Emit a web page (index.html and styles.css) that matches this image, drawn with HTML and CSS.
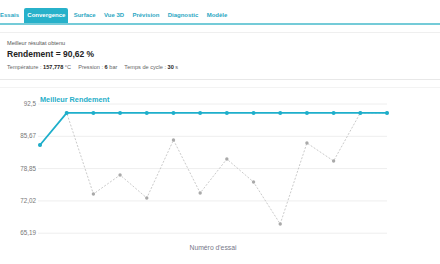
FILE: index.html
```html
<!DOCTYPE html>
<html lang="fr">
<head>
    <meta charset="UTF-8">
    <meta name="viewport" content="width=device-width, initial-scale=1.0">
    <title>Convergence</title>
    <link rel="stylesheet" href="styles.css">
</head>
<body>
    <nav class="tabs">
        <span class="tab">Essais</span>
        <span class="tab active">Convergence</span>
        <span class="tab">Surface</span>
        <span class="tab">Vue 3D</span>
        <span class="tab">Prévision</span>
        <span class="tab">Diagnostic</span>
        <span class="tab">Modèle</span>
    </nav>

    <section class="best-card">
        <p class="best-label">Meilleur résultat obtenu</p>
        <h2 class="best-value">Rendement = 90,62 %</h2>
        <p class="best-params">
            <span>Température : <b>157,778</b> °C</span>
            <span>Pression : <b>6</b> bar</span>
            <span>Temps de cycle : <b>30</b> s</span>
        </p>
    </section>

    <section class="chart-card">
        <svg class="chart" width="440" height="177" viewBox="0 87 440 177">
            <text class="chart-title" x="40" y="102">Meilleur Rendement</text>
            <g id="grid"></g>
            <polyline id="trials" class="trial-line" points=""></polyline>
            <g id="trial-dots"></g>
            <polyline id="best" class="best-line" points=""></polyline>
            <g id="best-dots"></g>
            <text class="axis-title" x="213" y="249.5" text-anchor="middle">Numéro d'essai</text>
        </svg>
    </section>

    <script>
        var trials = [83.83, 90.62, 73.47, 77.49, 72.62, 84.89, 73.68, 80.87, 76.0, 67.12, 84.25, 80.44, 90.62, 90.62];
        var ticks = [92.5, 85.67, 78.85, 72.02, 65.19];
        var x0 = 40, step = (387 - 40) / 13;
        var yTop = 104, yStep = 32.3;

        function yOf(v) {
            return yTop + (92.5 - v) / 6.83 * yStep;
        }

        var svgNs = "http://www.w3.org/2000/svg";
        function add(parent, tag, attrs, text) {
            var el = document.createElementNS(svgNs, tag);
            for (var k in attrs) el.setAttribute(k, attrs[k]);
            if (text) el.textContent = text;
            parent.appendChild(el);
            return el;
        }

        var grid = document.getElementById("grid");
        ticks.forEach(function(t, i) {
            var y = yTop + i * yStep;
            add(grid, "line", { x1: 38, x2: 387, y1: y, y2: y, "class": "grid-line" });
            add(grid, "text", { x: 36, y: y + 2, "text-anchor": "end", "class": "tick" }, t.toString().replace(".", ","));
        });

        var bestSoFar = 0, trialPts = [], bestPts = [];
        trials.forEach(function(v, i) {
            bestSoFar = Math.max(bestSoFar, v);
            var x = x0 + i * step;
            trialPts.push(x.toFixed(1) + "," + yOf(v).toFixed(1));
            bestPts.push(x.toFixed(1) + "," + yOf(bestSoFar).toFixed(1));
            add(document.getElementById("trial-dots"), "circle", { cx: x, cy: yOf(v), r: 1.7, "class": "trial-dot" });
            add(document.getElementById("best-dots"), "circle", { cx: x, cy: yOf(bestSoFar), r: 2, "class": "best-dot" });
        });
        document.getElementById("trials").setAttribute("points", trialPts.join(" "));
        document.getElementById("best").setAttribute("points", bestPts.join(" "));
    </script>
</body>
</html>
```

FILE: styles.css
```css
body {
    margin: 0;
    font-family: "Liberation Sans", Arial, sans-serif;
    background: #fff;
    overflow: hidden;
    width: 440px;
    height: 264px;
}
.tabs {
    display: flex;
    gap: 2.3px;
    margin-left: -3px;
    padding-top: 8px;
    border-bottom: 2px solid #74cbd8;
}
.tab {
    padding: 0 3px;
    line-height: 15px;
    font-size: 6px;
    font-weight: bold;
    color: #2ba7c3;
    border-radius: 2px 2px 0 0;
}
.tab.active {
    background-color: #27b1ca;
    color: #fff;
}
.best-card {
    margin-top: 7px;
    padding: 7px 7px 8px;
    border-top: 1px solid #efefef;
    border-bottom: 1px solid #e8e8e8;
}
.best-label {
    margin: 0;
    font-size: 5.6px;
    line-height: 7px;
    color: #555;
}
.best-value {
    margin: 1.5px 0 0;
    font-size: 8.5px;
    line-height: 11px;
    color: #222;
}
.best-params {
    margin: 4px 0 0;
    font-size: 5.6px;
    line-height: 7px;
    color: #666;
    display: flex;
    gap: 7px;
}
.best-params b {
    color: #222;
}
.chart-card {
    margin-top: 7px;
    border-top: 1px solid #f3f3f3;
}
.chart {
    display: block;
    margin-top: -1px;
}
.chart-title {
    font-size: 7.3px;
    font-weight: bold;
    fill: #26aec8;
}
.grid-line {
    stroke: #eeeeee;
    stroke-width: 1;
}
.tick {
    font-size: 6.3px;
    fill: #777;
}
.trial-line {
    fill: none;
    stroke: #c4c4c4;
    stroke-width: 0.9;
    stroke-dasharray: 2 1.6;
}
.trial-dot {
    fill: #a9a9a9;
}
.best-line {
    fill: none;
    stroke: #1eafcb;
    stroke-width: 1.8;
}
.best-dot {
    fill: #1eafcb;
}
.axis-title {
    font-size: 6.8px;
    fill: #778;
}
```
